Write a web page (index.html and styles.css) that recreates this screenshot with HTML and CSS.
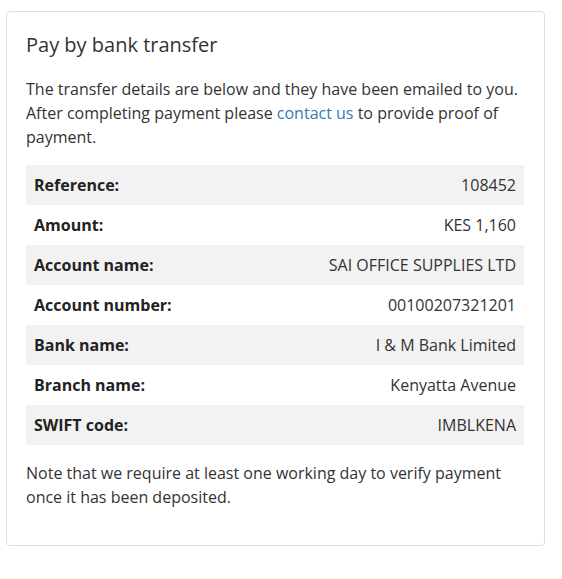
FILE: index.html
```html
<!DOCTYPE html>
<html lang="en">
<head>
    <meta charset="UTF-8">
    <meta name="viewport" content="width=device-width, initial-scale=1.0">
    <title>Pay by bank transfer</title>
    <link rel="stylesheet" href="styles.css">
</head>
<body>
    <div class="panel">
        <h3 class="panel-title">Pay by bank transfer</h3>
        <p class="intro">The transfer details are below and they have been emailed to you. After completing payment please <a href="#">contact us</a> to provide proof of payment.</p>
        <table class="details">
            <tr><th>Reference:</th><td>108452</td></tr>
            <tr><th>Amount:</th><td>KES 1,160</td></tr>
            <tr><th>Account name:</th><td>SAI OFFICE SUPPLIES LTD</td></tr>
            <tr><th>Account number:</th><td>00100207321201</td></tr>
            <tr><th>Bank name:</th><td>I &amp; M Bank Limited</td></tr>
            <tr><th>Branch name:</th><td>Kenyatta Avenue</td></tr>
            <tr><th>SWIFT code:</th><td>IMBLKENA</td></tr>
        </table>
        <p class="note">Note that we require at least one working day to verify payment once it has been deposited.</p>
    </div>
</body>
</html>
```

FILE: styles.css
```css
body {
    font-family: "Open Sans", Arial, sans-serif;
    font-size: 16px;
    line-height: 24px;
    color: #333;
    background-color: #fff;
    margin: 0;
    padding: 11px 17px 0 6px;
}
.panel {
    border: 1px solid #ddd;
    border-radius: 4px;
    padding: 20px 20px 36px 19px;
}
.panel-title {
    font-size: 20px;
    font-weight: normal;
    line-height: 26px;
    margin: 0 0 19px 0;
    color: #333;
}
.intro {
    margin: 0 0 16px 0;
}
.intro a {
    color: #337ab7;
    text-decoration: none;
}
.details {
    width: 100%;
    border-collapse: collapse;
    margin-bottom: 16px;
}
.details th,
.details td {
    height: 40px;
    padding: 0 8px;
}
.details th {
    text-align: left;
    font-weight: bold;
    color: #222;
}
.details td {
    text-align: right;
}
.details tr:nth-child(odd) {
    background-color: #f2f2f2;
}
.note {
    margin: 0;
}
```
